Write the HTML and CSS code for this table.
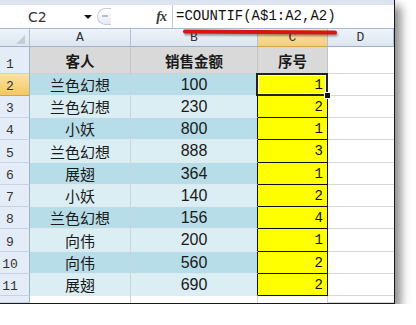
FILE: index.html
```html
<!DOCTYPE html>
<html>
<head>
<meta charset="utf-8">
<link rel="stylesheet" href="styles.css">
</head>
<body>
<div class="window">
  <div class="topstrip"></div>
  <div class="fbar">
    <div class="namebox"><span class="ref">C2</span><span class="drop"></span></div>
    <div class="splitter"><span class="dash"></span></div>
    <div class="fx">fx</div>
    <div class="formula">=COUNTIF(A$1:A2,A2)</div>
  </div>
  <div class="sheet">
    <div class="ch corner"><span class="tri"></span></div>
    <div class="ch">A</div>
    <div class="ch">B</div>
    <div class="ch sel">C</div>
    <div class="ch">D</div>

    <div class="rh">1</div>
    <div class="c gray bold">客人</div>
    <div class="c gray bold">销售金额</div>
    <div class="c gray bold cb">序号</div>
    <div class="c d"></div>

    <div class="rh sel">2</div>
    <div class="c dark">兰色幻想</div>
    <div class="c dark bk">100</div>
    <div class="c y active">1<span class="handle"></span></div>
    <div class="c d"></div>

    <div class="rh">3</div>
    <div class="c light">兰色幻想</div>
    <div class="c light bk">230</div>
    <div class="c y">2</div>
    <div class="c d"></div>

    <div class="rh">4</div>
    <div class="c dark">小妖</div>
    <div class="c dark bk">800</div>
    <div class="c y">1</div>
    <div class="c d"></div>

    <div class="rh">5</div>
    <div class="c light">兰色幻想</div>
    <div class="c light bk">888</div>
    <div class="c y">3</div>
    <div class="c d"></div>

    <div class="rh">6</div>
    <div class="c dark">展翅</div>
    <div class="c dark bk">364</div>
    <div class="c y">1</div>
    <div class="c d"></div>

    <div class="rh">7</div>
    <div class="c light">小妖</div>
    <div class="c light bk">140</div>
    <div class="c y">2</div>
    <div class="c d"></div>

    <div class="rh">8</div>
    <div class="c dark">兰色幻想</div>
    <div class="c dark bk">156</div>
    <div class="c y">4</div>
    <div class="c d"></div>

    <div class="rh">9</div>
    <div class="c light">向伟</div>
    <div class="c light bk">200</div>
    <div class="c y">1</div>
    <div class="c d"></div>

    <div class="rh">10</div>
    <div class="c dark">向伟</div>
    <div class="c dark bk">560</div>
    <div class="c y">2</div>
    <div class="c d"></div>

    <div class="rh">11</div>
    <div class="c light">展翅</div>
    <div class="c light bk">690</div>
    <div class="c y">2</div>
    <div class="c d"></div>

    <div class="rh"></div>
    <div class="c w"></div>
    <div class="c w"></div>
    <div class="c w"></div>
    <div class="c d"></div>
  </div>
  <div class="redline"></div>
</div>
</body>
</html>
```

FILE: styles.css
```css
html, body {
  margin: 0;
  padding: 0;
  background: #ffffff;
}

.window {
  position: relative;
  width: 395px;
  height: 304px;
  box-sizing: border-box;
  border-right: 1px solid #1a1a1a;
  border-bottom: 1px solid #1a1a1a;
  background: #fff;
  box-shadow: 6px 6px 9px rgba(0, 0, 0, 0.45);
  overflow: hidden;
}

.topstrip {
  height: 5px;
  background: #dbe4f0;
}

.fbar {
  height: 24px;
  box-sizing: border-box;
  border-bottom: 1px solid #a9b9cc;
  display: flex;
  align-items: stretch;
  background: #fff;
}

.namebox {
  width: 95px;
  display: flex;
  align-items: center;
  position: relative;
}

.ref {
  font-family: "DejaVu Sans", sans-serif;
  font-size: 14px;
  color: #333;
  margin-left: 28px;
}

.drop {
  position: absolute;
  left: 84px;
  top: 10px;
  width: 0;
  height: 0;
  border-left: 4px solid transparent;
  border-right: 4px solid transparent;
  border-top: 4px solid #111;
}

.splitter {
  width: 14px;
  height: 17px;
  margin-top: 3px;
  margin-left: 2px;
  box-sizing: border-box;
  border: 1px solid #c3ccd8;
  border-right: none;
  border-radius: 9px 0 0 9px;
  background: linear-gradient(#ffffff, #e6ebf2);
  position: relative;
}

.dash {
  position: absolute;
  left: 4px;
  top: 6px;
  width: 6px;
  height: 2px;
  background: #b4bfcc;
}

.fx {
  width: 62px;
  box-sizing: border-box;
  text-align: right;
  padding-right: 6px;
  font-family: "Liberation Serif", serif;
  font-style: italic;
  font-weight: bold;
  font-size: 14px;
  line-height: 23px;
  color: #3a3a3a;
  border-right: 1px solid #bcc8d6;
  letter-spacing: -1px;
}

.formula {
  padding-left: 3px;
  font-family: "Liberation Mono", monospace;
  font-size: 14px;
  line-height: 23px;
  color: #111;
  white-space: nowrap;
}

.sheet {
  display: grid;
  grid-template-columns: 30px 101px 127px 70px 66px;
  grid-template-rows: 18px 27px 22px 22px 22px 23px 22px 22px 22px 23px 22px 22px 7px;
}

.ch {
  box-sizing: border-box;
  border-right: 1px solid #b3c3d6;
  border-bottom: 1px solid #9eb3cb;
  background: linear-gradient(#eef3f9, #dde6f1);
  font-family: "Liberation Mono", monospace;
  font-size: 13px;
  color: #333;
  display: flex;
  align-items: center;
  justify-content: center;
}

.ch.sel {
  background: linear-gradient(#fbe6b0, #f5cf79);
  border-bottom-color: #d5a544;
}

.corner {
  position: relative;
}

.tri {
  position: absolute;
  right: 4px;
  bottom: 2px;
  width: 0;
  height: 0;
  border-left: 9px solid transparent;
  border-bottom: 9px solid #c4ccd6;
}

.rh {
  box-sizing: border-box;
  border-right: 1px solid #9eb3cb;
  border-bottom: 1px solid #c5d3e4;
  background: #e4ecf7;
  font-family: "Liberation Mono", monospace;
  font-size: 13px;
  color: #333;
  display: flex;
  align-items: flex-end;
  justify-content: center;
  padding-right: 9px;
  padding-bottom: 1px;
}

.rh.sel {
  background: linear-gradient(#fbe2a2, #f3c862);
  border-bottom-color: #d5a544;
}

.c {
  box-sizing: border-box;
  border-right: 1px solid #c9d3dc;
  border-bottom: 1px solid #dfe9ee;
  display: flex;
  align-items: center;
  justify-content: center;
  font-family: "Noto Sans CJK SC", "Liberation Sans", sans-serif;
  font-size: 15px;
  color: #1a1a1a;
  position: relative;
}

.gray {
  background: #d9d9d9;
  border-bottom-color: #cfcfcf;
  border-right-color: #c4c4c4;
}

.bold {
  font-weight: bold;
  font-size: 14.5px;
}

.cb {
  border-bottom-color: #111;
  border-right-color: #c4c4c4;
}

.dark {
  background: #b7dde8;
}

.light {
  background: #daeef3;
}

.bk {
  border-right-color: #111;
  font-family: "Liberation Sans", Arial, sans-serif;
  font-size: 16px;
}

.y {
  background: #ffff00;
  border-right: 1px solid #111;
  border-bottom: 1px solid #111;
  justify-content: flex-end;
  padding-right: 4px;
  font-family: "Liberation Mono", monospace;
  font-size: 14px;
  color: #111;
}

.active::after {
  content: "";
  position: absolute;
  left: -2px;
  top: -1px;
  right: -1px;
  bottom: -1px;
  border: 2px solid #222;
  box-shadow: inset 0 0 0 1px #fff;
  pointer-events: none;
}

.handle {
  position: absolute;
  right: -4px;
  bottom: -4px;
  width: 5px;
  height: 5px;
  background: #111;
  border: 1px solid #fff;
  z-index: 2;
}

.d {
  background: #fff;
  border-right: none;
  border-bottom: 1px solid #d8d8d8;
}

.w {
  background: #fff;
  border-bottom: none;
}

.redline {
  position: absolute;
  left: 183px;
  top: 30px;
  width: 154px;
  height: 4px;
  background: #d81414;
  border-radius: 2px;
  box-shadow: 1px 2px 2px rgba(0, 0, 0, 0.35);
  transform: rotate(0.3deg);
}
```
